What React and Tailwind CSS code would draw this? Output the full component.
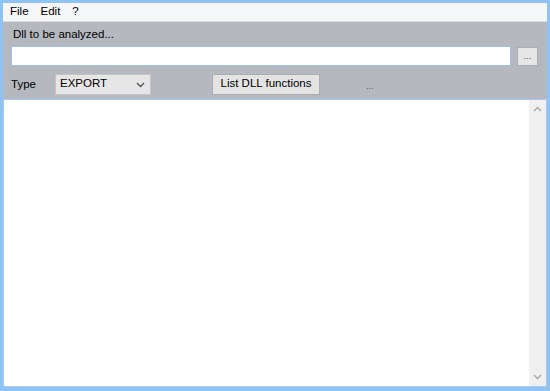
import React, { useState } from 'react';

const font = { fontFamily: '"Liberation Sans", Arial, sans-serif' };

const Chevron = ({ up, className = 'text-[#a6a6a6]' }) => (
  <svg width="9" height="6" viewBox="0 0 9 6" className={className}>
    <path
      d={up ? 'M1 5 L4.5 1.5 L8 5' : 'M1 1 L4.5 4.5 L8 1'}
      fill="none"
      stroke="currentColor"
      strokeWidth="1.4"
    />
  </svg>
);

const App = () => {
  const [type, setType] = useState('EXPORT');

  return (
    <div
      className="w-[550px] h-[391px] bg-[#8fc3f3] px-[3px] pt-[3px] pb-[4px] flex flex-col text-[11.5px] text-black"
      style={font}
    >
      {/* menu bar */}
      <div className="h-[19px] bg-[#f5f6f7] flex items-center gap-[12px] px-[7px] border-b border-[#dadbdc]">
        <span>File</span>
        <span>Edit</span>
        <span>?</span>
      </div>

      {/* options panel */}
      <div className="h-[77px] bg-[#b5b8be] flex flex-col px-[8px]">
        <div className="pt-[5px] pl-[2px] h-[24px] leading-[14px]">Dll to be analyzed...</div>
        <div className="flex items-center gap-[6px]">
          <div className="h-[20px] w-[500px] bg-white border border-[#9fc2e6]" />
          <button className="h-[19px] w-[21px] bg-[#e6e6e6] border border-[#adadad] text-[9px] leading-none text-[#444]">
            ...
          </button>
        </div>
        <div className="flex items-center mt-[7px] h-[22px]">
          <span className="w-[44px] pt-[2px]">Type</span>
          <div className="relative w-[96px] h-[21px] bg-[#e6e6e6] border border-[#c4c4c4] flex items-center pl-[4px]">
            <span>{type}</span>
            <span className="absolute right-[5px] top-[7px]">
              <Chevron className="text-[#555]" />
            </span>
          </div>
          <button
            className="ml-[61px] w-[108px] h-[21px] bg-[#e3e3e3] border border-[#adadad] leading-none"
            onClick={() => setType('EXPORT')}
          >
            List DLL functions
          </button>
          <span className="ml-[46px] pt-[6px] text-[9px] text-[#555]">...</span>
        </div>
      </div>

      {/* output */}
      <div className="flex-1 bg-white border border-[#a7cbee] flex justify-end">
        <div className="w-[17px] bg-[#f0f0f0] flex flex-col items-center justify-between py-[6px]">
          <Chevron up />
          <Chevron />
        </div>
      </div>
    </div>
  );
};

export default App;
